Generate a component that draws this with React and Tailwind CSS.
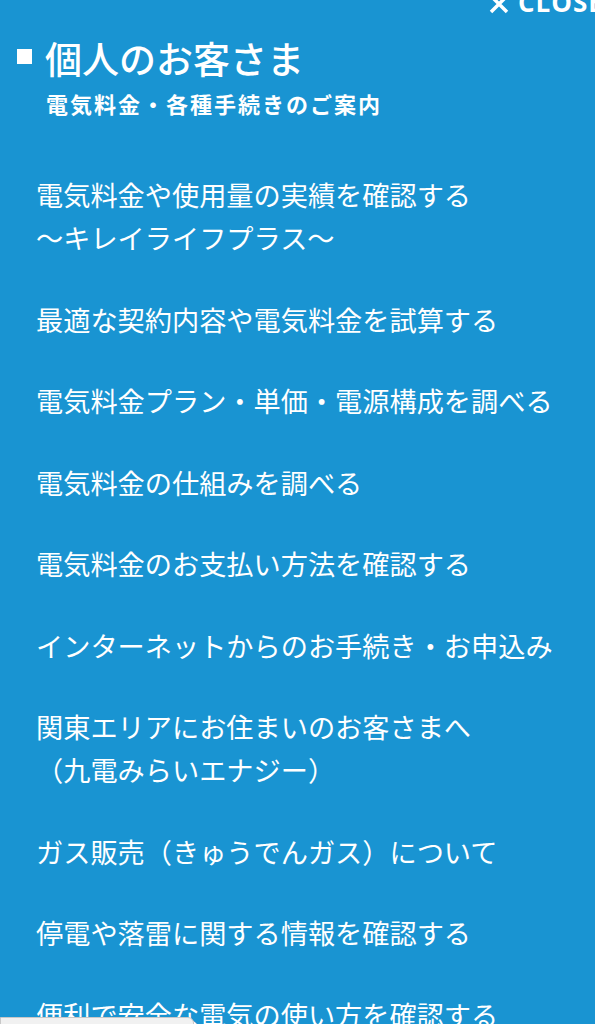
import React from "react";

const items = [
  ["電気料金や使用量の実績を確認する", "〜キレイライフプラス〜"],
  ["最適な契約内容や電気料金を試算する"],
  ["電気料金プラン・単価・電源構成を調べる"],
  ["電気料金の仕組みを調べる"],
  ["電気料金のお支払い方法を確認する"],
  ["インターネットからのお手続き・お申込み"],
  ["関東エリアにお住まいのお客さまへ", "（九電みらいエナジー）"],
  ["ガス販売（きゅうでんガス）について"],
  ["停電や落雷に関する情報を確認する"],
  ["便利で安全な電気の使い方を確認する"],
];

export default function App() {
  return (
    <div
      className="relative w-[595px] h-[1024px] overflow-hidden bg-[#1994d2] text-white"
      style={{ fontFamily: '"Noto Sans CJK JP", "Noto Sans", sans-serif' }}
    >
      <div
        className="absolute top-[-17px] left-[489px] flex items-center gap-[9px] whitespace-nowrap text-[26px] font-bold tracking-[1px]"
        style={{ fontFamily: '"Open Sans", "Liberation Sans", sans-serif' }}
      >
        <svg width="20" height="20" viewBox="0 0 20 20" className="mt-[2px]">
          <path d="M2 2 L18 18 M18 2 L2 18" stroke="white" strokeWidth="3.5" />
        </svg>
        <span>CLOSE</span>
      </div>

      <div className="pt-[36px]">
        <div className="flex items-center pl-[17px] gap-[13px]">
          <span className="w-[15px] h-[15px] bg-white mt-[-4px]" />
          <h1 className="text-[37px] leading-[44px] font-medium">個人のお客さま</h1>
        </div>
        <p className="pl-[46px] mt-[3px] text-[22px] leading-[40px] font-bold tracking-[2px]">
          電気料金・各種手続きのご案内
        </p>
      </div>

      <ul className="mt-[31px]">
        {items.map((lines, i) => (
          <li key={i} className="px-[36px] py-[19.25px] text-[27.2px] leading-[43px] font-normal">
            {lines.map((l, j) => (
              <div key={j} className="whitespace-nowrap">{l}</div>
            ))}
          </li>
        ))}
      </ul>

      <div className="absolute left-0 bottom-[-20px] w-[194px] h-[27px] bg-[#f1f1f1] border border-[#c8c8c8] rounded-tr-[6px]" />
    </div>
  );
}
